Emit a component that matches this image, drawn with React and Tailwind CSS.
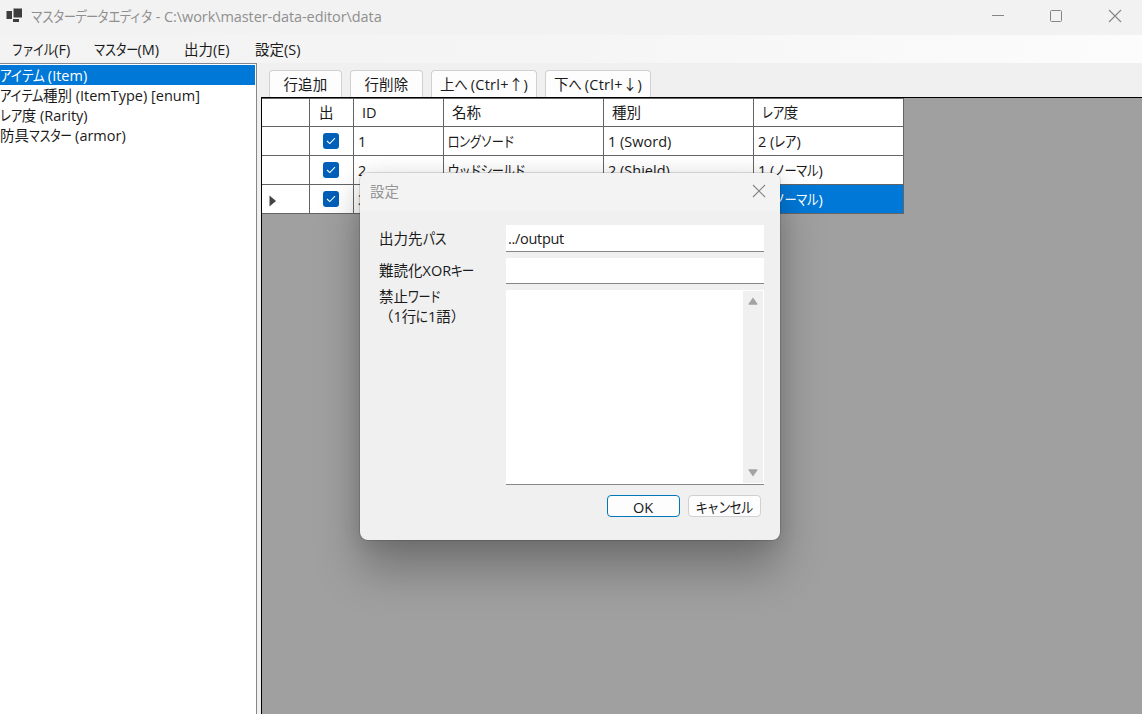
import { Fragment } from "react";

const KANA = /([\u3041-\u30ff]+)/;
const TIGHT = 0.9;

// UI text with condensed kana, like the Windows Japanese system font.
// kana = advance of one kana in em
function Text({ children, kana = 0.75, className = "" }) {
  const scale = kana / TIGHT;
  return (
    <span className={`inline-block whitespace-pre ${className}`}>
      {children.split(KANA).map((part, i) =>
        KANA.test(part) ? (
          <span
            key={i}
            className="inline-block origin-left tracking-[-0.1em]"
            style={{
              transform: `translateX(-0.03em) scaleX(${scale})`,
              marginRight: `${-(1 - scale) * part.length * TIGHT}em`,
            }}
          >
            {part}
          </span>
        ) : (
          <Fragment key={i}>{part}</Fragment>
        )
      )}
    </span>
  );
}

function CloseIcon() {
  return (
    <svg width="14" height="14" viewBox="0 0 14 14" fill="none" stroke="#858585" strokeWidth="1.1">
      <path d="M1 1 L13 13 M13 1 L1 13" />
    </svg>
  );
}

function TitleBar() {
  return (
    <header className="flex h-[35px] shrink-0 items-center bg-[#f2f2f2] text-[#8f8f8f]">
      <svg className="ml-[6px] -mt-[4px] shrink-0" width="17" height="15" viewBox="0 0 17 15" fill="#3d3d3d">
        <rect x="0.5" y="3" width="5.5" height="8" />
        <rect x="7.5" y="0.5" width="8.5" height="9" />
        <rect x="7" y="11" width="6" height="3" />
      </svg>
      <div className="ml-2 -mt-[2px] flex-1 tracking-[-0.08px]">
        <Text kana={0.765}>マスターデータエディタ - C:\work\master-data-editor\data</Text>
      </div>
      <div className="-mt-[3px] flex items-center">
        <svg width="12" height="14" viewBox="0 0 12 14" className="mr-[46px]">
          <rect x="0" y="6" width="12" height="1" fill="#858585" />
        </svg>
        <svg width="12" height="12" viewBox="0 0 12 12" className="mr-[46px]" fill="none" stroke="#858585">
          <rect x="0.5" y="0.5" width="11" height="11" rx="1" />
        </svg>
        <div className="mr-5">
          <CloseIcon />
        </div>
      </div>
    </header>
  );
}

const menus = [
  { label: "ファイル(F)", width: "w-[82px]", kana: 0.73 },
  { label: "マスター(M)", width: "w-[90px]", kana: 0.75 },
  { label: "出力(E)", width: "w-[71px]" },
  { label: "設定(S)", width: "w-[80px]" },
];

function MenuBar() {
  return (
    <nav className="flex h-7 shrink-0 items-center bg-linear-to-r from-[#f3f3f3] via-[#f5f5f5] to-[#fcfcfc] pt-px pl-3">
      {menus.map((m) => (
        <div key={m.label} className={m.width}>
          <Text kana={m.kana}>{m.label}</Text>
        </div>
      ))}
    </nav>
  );
}

const masters = [
  { label: "アイテム (Item)", kana: 0.785 },
  { label: "アイテム種別 (ItemType) [enum]", kana: 0.765 },
  { label: "レア度 (Rarity)", kana: 0.75 },
  { label: "防具マスター (armor)", kana: 0.73 },
];

function MasterList() {
  return (
    <aside className="w-[257px] shrink-0 border-t border-r border-[#828790] bg-white pt-px pr-px">
      {masters.map((m, i) => (
        <div key={m.label} className={`h-5 leading-[22px] ${i === 0 ? "bg-[#0078d7] text-white" : ""}`}>
          <Text kana={m.kana}>{m.label}</Text>
        </div>
      ))}
    </aside>
  );
}

const tools = [
  { label: "行追加", width: "w-[73px]" },
  { label: "行削除", width: "w-[73px]" },
  { label: "上へ (Ctrl+↑)", width: "w-[106px]" },
  { label: "下へ (Ctrl+↓)", width: "w-[106px]" },
];

function Toolbar() {
  return (
    <div className="flex h-[34px] shrink-0 gap-2 pt-[7px] pl-2">
      {tools.map((t) => (
        <button
          key={t.label}
          className={`${t.width} h-[27px] rounded-t border border-b-0 border-[#d0d0d0] bg-[#fdfdfd] text-center leading-[27px] tracking-[0.25px]`}
        >
          <Text kana={0.82}>{t.label}</Text>
        </button>
      ))}
    </div>
  );
}

const GRID = "grid grid-cols-[48px_44px_90px_160px_150px_150px]";
const CELL = "h-[29px] border-r border-b border-[#646464] leading-[29px] overflow-hidden";

const headers = ["", "出", "ID", "名称", "種別", "レア度"];

const rows = [
  ["1", "ロングソード", "1 (Sword)", "2 (レア)"],
  ["2", "ウッドシールド", "2 (Shield)", "1 (ノーマル)"],
  ["3", "レザーアーマー", "3 (Armor)", "1 (ノーマル)"],
];

function Checkbox() {
  return (
    <span className="flex size-4 items-center justify-center rounded-[3px] bg-[#005fb8]">
      <svg width="10" height="8" viewBox="0 0 10 8" fill="none" stroke="#fff" strokeWidth="1.1">
        <path d="M1 4 L3.8 6.6 L9 1.2" />
      </svg>
    </span>
  );
}

function DataGrid() {
  return (
    <div className="flex-1 border-t border-l border-black bg-[#a0a0a0]">
      <div className="w-[642px] border-t border-[#646464] bg-white">
        <div className={GRID}>
          {headers.map((h, i) => (
            <div key={i} className={`h-7 border-r border-b border-[#646464] leading-[27px] ${i === 1 ? "pl-[9px]" : "pl-2"}`}>
              <Text>{h}</Text>
            </div>
          ))}
        </div>
        {rows.map((row, r) => {
          const current = r === rows.length - 1;
          return (
            <div key={r} className={GRID}>
              <div className={`${CELL} flex items-center pl-[7px]`}>
                {current && (
                  <svg width="8" height="12" viewBox="0 0 8 12" fill="#444" className="mt-[3px]">
                    <path d="M0.5 0.5 L7 6 L0.5 11.5 Z" />
                  </svg>
                )}
              </div>
              <div className={`${CELL} flex items-center justify-center pr-px`}>
                <Checkbox />
              </div>
              {row.map((cell, c) => (
                <div
                  key={c}
                  className={`${CELL} pl-1 ${current && c > 0 ? "bg-[#0078d7] text-white" : ""}`}
                >
                  <Text kana={0.76}>{cell}</Text>
                </div>
              ))}
            </div>
          );
        })}
      </div>
    </div>
  );
}

function SettingsDialog() {
  return (
    <div className="absolute top-[173px] left-[360px] flex h-[367px] w-[420px] flex-col overflow-hidden rounded-lg bg-[#f0f0f0] shadow-[0_0_0_1px_rgba(0,0,0,0.12),0_30px_46px_rgba(0,0,0,0.28),0_2px_20px_rgba(0,0,0,0.12)]">
      <div className="flex h-[38px] shrink-0 items-center justify-between bg-[#f3f3f3] pr-[14px] pb-[2px] pl-[10px] text-[#949494]">
        <Text className="mt-px">設定</Text>
        <CloseIcon />
      </div>
      <div className="grid grid-cols-[127px_258px] pt-[14px] pl-[19px]">
        <div className="h-[33px] leading-[27px]">
          <Text kana={0.8}>出力先パス</Text>
        </div>
        <div className="h-[27px] border-b border-[#868686] bg-white pl-[2px] leading-[27px] tracking-[-0.3px]">
          <Text>../output</Text>
        </div>
        <div className="h-8 leading-[26px]">
          <Text kana={0.78}>難読化XORキー</Text>
        </div>
        <div className="h-[26px] border-b border-[#868686] bg-white" />
        <div className="-mt-[3px] leading-5">
          <Text className="block">禁止ワード</Text>
          <Text className="block" kana={0.8}>（1行に1語）</Text>
        </div>
        <div className="flex h-[195px] justify-end border-b border-[#868686] bg-white">
          <div className="mt-px mr-px mb-px flex w-5 flex-col items-center justify-between bg-[#f0f0f0] pt-[6px] pb-[6px]">
            <svg width="10" height="8" viewBox="0 0 10 8" fill="#a3a3a3">
              <path d="M5 0.5 L9.6 7 Q9.6 7.8 8.8 7.8 H1.2 Q0.4 7.8 0.4 7 Z" />
            </svg>
            <svg width="10" height="8" viewBox="0 0 10 8" fill="#a3a3a3">
              <path d="M5 7.5 L0.4 1 Q0.4 0.2 1.2 0.2 H8.8 Q9.6 0.2 9.6 1 Z" />
            </svg>
          </div>
        </div>
      </div>
      <div className="mt-[10px] mr-[19px] flex justify-end gap-2">
        <button className="h-[22px] w-[73px] rounded border border-[#0078b8] bg-[#fdfdfd] pr-px leading-[23px]">
          <Text>OK</Text>
        </button>
        <button className="h-[22px] w-[73px] rounded border border-[#d0d0d0] bg-[#fdfdfd] leading-[23px]">
          <Text kana={0.78}>キャンセル</Text>
        </button>
      </div>
    </div>
  );
}

export default function App() {
  return (
    <div className="relative flex h-[714px] w-[1142px] flex-col overflow-hidden bg-[#f0f0f0] font-['Open_Sans','Noto_Sans_CJK_JP',sans-serif] text-[14.5px] text-[#1a1a1a]">
      <TitleBar />
      <MenuBar />
      <main className="flex min-h-0 flex-1">
        <MasterList />
        <section className="ml-1 flex min-w-0 flex-1 flex-col">
          <Toolbar />
          <DataGrid />
        </section>
      </main>
      <SettingsDialog />
    </div>
  );
}
